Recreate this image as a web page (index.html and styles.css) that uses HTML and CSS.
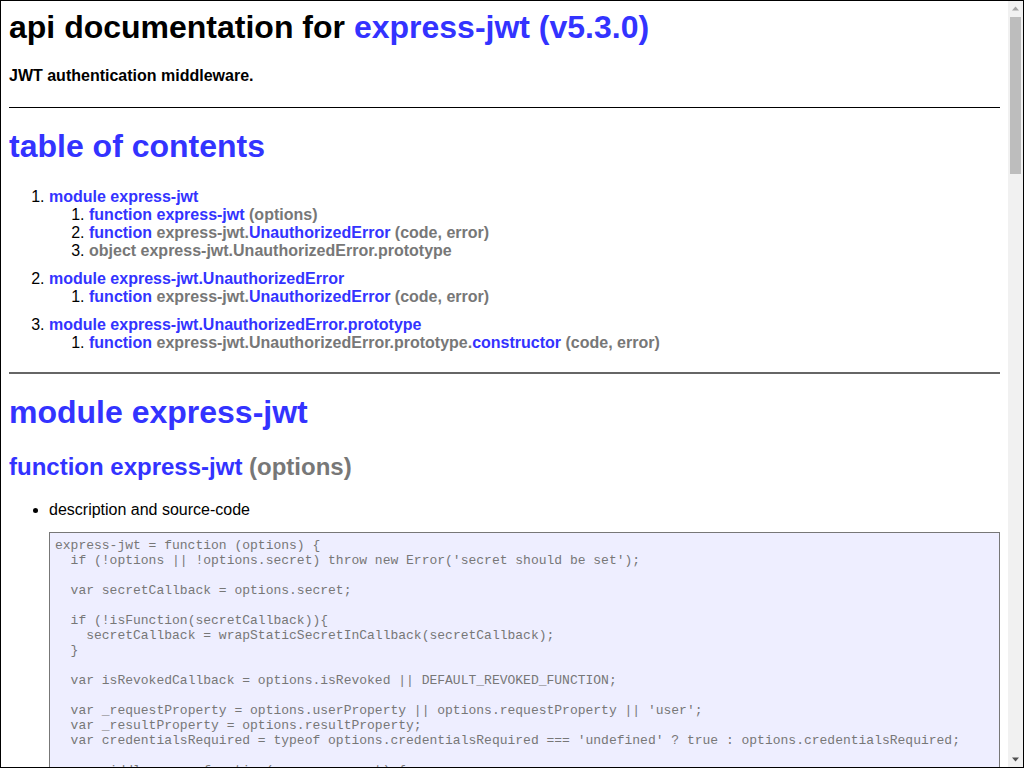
FILE: index.html
```html
<!DOCTYPE html>
<html lang="en">
<head>
<meta charset="utf-8">
<title>api documentation for express-jwt (v5.3.0)</title>
<link rel="stylesheet" href="styles.css">
</head>
<body>
<div class="page">
<div class="apidoc">
  <h1 class="title">api documentation for <a href="#readme">express-jwt (v5.3.0)</a></h1>
  <h4 class="tagline">JWT authentication middleware.</h4>

  <div class="section section-toc">
    <h1><a href="#toc" id="toc">table of contents</a></h1>
    <ol class="toc">
      <li class="module-item"><a href="#m1">module express-jwt</a>
        <ol>
          <li><a class="element-link" href="#e1">function <span class="sig"></span>express-jwt<span class="sig"> (options)</span></a></li>
          <li><a class="element-link" href="#e2">function <span class="sig">express-jwt.</span>UnauthorizedError<span class="sig"> (code, error)</span></a></li>
          <li><span class="sig">object <span>express-jwt.UnauthorizedError.prototype</span></span></li>
        </ol>
      </li>
      <li class="module-item"><a href="#m2">module express-jwt.UnauthorizedError</a>
        <ol>
          <li><a class="element-link" href="#e3">function <span class="sig">express-jwt.</span>UnauthorizedError<span class="sig"> (code, error)</span></a></li>
        </ol>
      </li>
      <li class="module-item"><a href="#m3">module express-jwt.UnauthorizedError.prototype</a>
        <ol>
          <li><a class="element-link" href="#e4">function <span class="sig">express-jwt.UnauthorizedError.prototype.</span>constructor<span class="sig"> (code, error)</span></a></li>
        </ol>
      </li>
    </ol>
  </div>

  <div class="section section-module">
    <h1><a href="#m1" id="m1">module express-jwt</a></h1>
    <div class="element">
      <h2><a href="#e1" id="e1">function <span class="sig"></span>express-jwt<span class="sig"> (options)</span></a></h2>
      <ul>
        <li>description and source-code
<pre class="code">express-jwt = function (options) {
  if (!options || !options.secret) throw new Error('secret should be set');

  var secretCallback = options.secret;

  if (!isFunction(secretCallback)){
    secretCallback = wrapStaticSecretInCallback(secretCallback);
  }

  var isRevokedCallback = options.isRevoked || DEFAULT_REVOKED_FUNCTION;

  var _requestProperty = options.userProperty || options.requestProperty || 'user';
  var _resultProperty = options.resultProperty;
  var credentialsRequired = typeof options.credentialsRequired === 'undefined' ? true : options.credentialsRequired;

  var middleware = function(req, res, next) {
    var token;

    if (req.method === 'OPTIONS' &amp;&amp; req.headers.hasOwnProperty('access-control-request-headers')) {
      var hasAuthInAccessControl = !!~req.headers['access-control-request-headers']
                                    .split(',').map(function (header) {
                                      return header.trim();
                                    }).indexOf('authorization');

      if (hasAuthInAccessControl) {
        return next();
      }
    }
}</pre>
        </li>
        <li>example usage
<pre class="code">n/a</pre>
        </li>
      </ul>
    </div>
  </div>
</div>
</div>
<div class="scrollbar" aria-hidden="true">
  <div class="sb-button sb-up"><svg width="15" height="15" viewBox="0 0 15 15"><path d="M4 9.5 L7.5 5.5 L11 9.5 Z" fill="#a3a3a3"/></svg></div>
  <div class="sb-track"><div class="sb-thumb"></div></div>
  <div class="sb-button sb-down"><svg width="15" height="15" viewBox="0 0 15 15"><path d="M4 5.5 L11 5.5 L7.5 9.5 Z" fill="#505050"/></svg></div>
</div>
</body>
</html>
```
FILE: styles.css
```css
html {
  height: 100%;
  overflow: hidden;
  border: 1px solid #000;
  box-sizing: border-box;
  background: #fff;
}

body {
  height: 100%;
  margin: 0;
  display: flex;
  font-family: "Liberation Sans", Arial, Helvetica, sans-serif;
  color: #000;
  background: #fff;
}

.page {
  flex: 1;
  min-width: 0;
  overflow: hidden;
  padding: 8px;
}

.scrollbar {
  width: 15px;
  flex: none;
  display: flex;
  flex-direction: column;
  background: #f1f1f1;
}

.sb-button {
  height: 15px;
  flex: none;
}

.sb-button svg {
  display: block;
}

.sb-track {
  flex: 1;
  padding: 1px 2px 0 2px;
}

.sb-thumb {
  height: 157px;
  background: #bdbdbd;
}

.apidoc a[href] {
  color: #33f;
  font-weight: bold;
  text-decoration: none;
}

.title {
  margin-top: 0;
}

.tagline {
  margin: 21px 0 22px;
}

.section {
  margin-top: 20px;
}

.section-toc {
  border-top: 1px solid #000;
}

.section-toc > h1 {
  margin: 20px 0 23px;
}

.section-module {
  border-top: 2px solid #666;
}

.section-module > h1 {
  margin-top: 20px;
}

.module-item {
  margin-top: 10px;
}

.sig {
  color: #777;
  font-weight: bold;
}

.code {
  background: #eef;
  border: 1px solid #777;
  color: #777;
  padding: 5px;
  white-space: pre-wrap;
  font-family: "Liberation Mono", "Courier New", monospace;
  font-size: 13px;
}
```
